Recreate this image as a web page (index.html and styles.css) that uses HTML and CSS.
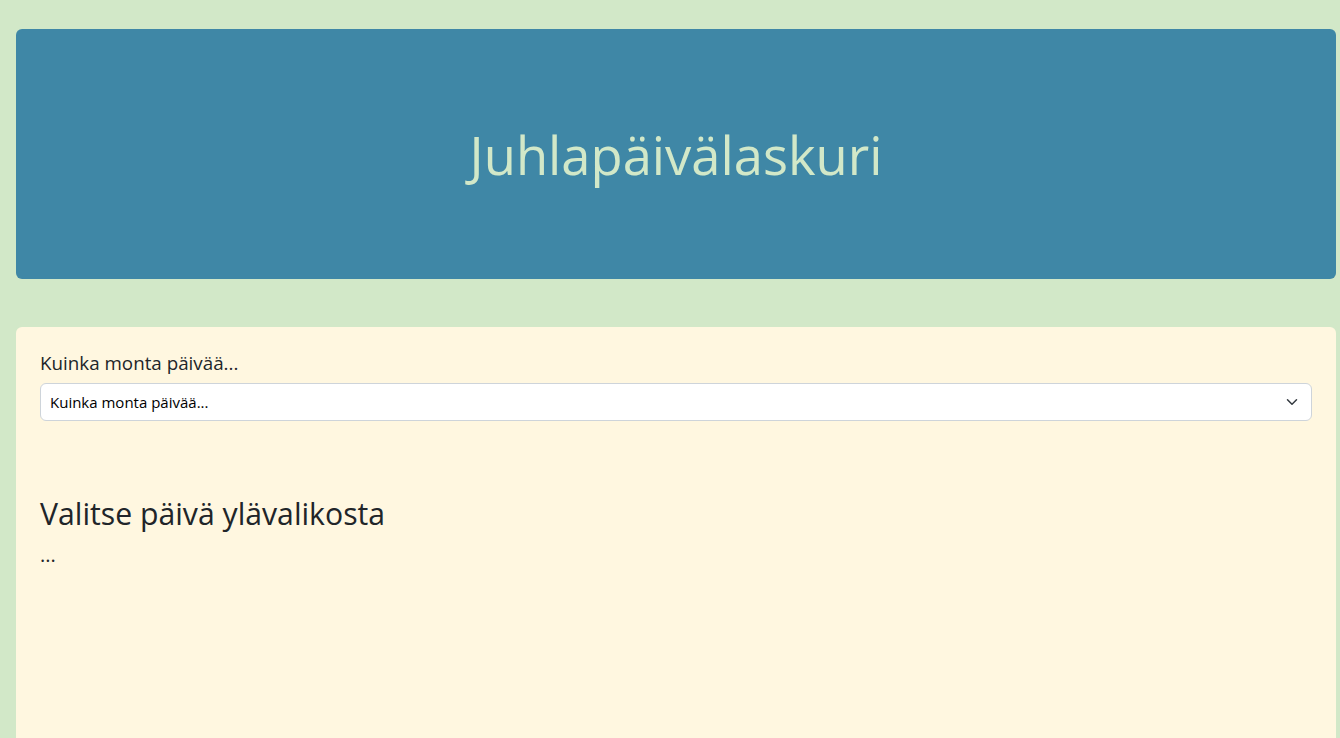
FILE: index.html
```html
<!DOCTYPE html>
<html lang="fi">
<head>
<meta charset="utf-8">
<title>Juhlapäivälaskuri</title>
<link rel="stylesheet" href="styles.css">
</head>
<body>
<div class="page">
  <header class="hero">
    <h1 class="hero-title">Juhlapäivälaskuri</h1>
  </header>
  <main class="card">
    <label class="field-label" for="days">Kuinka monta päivää...</label>
    <div class="select-wrap">
      <select id="days" class="field-select">
        <option>Kuinka monta päivää...</option>
      </select>
      <svg class="chevron" viewBox="0 0 16 16" width="16" height="12" aria-hidden="true"><path fill="none" stroke="#343a40" stroke-linecap="round" stroke-linejoin="round" stroke-width="2" d="m2 5 6 6 6-6"/></svg>
    </div>
    <h2 class="result-title">Valitse päivä ylävalikosta</h2>
    <p class="result-text">...</p>
  </main>
</div>
</body>
</html>
```
FILE: styles.css
```css
* { box-sizing: border-box; }
html, body { margin: 0; padding: 0; }
body {
  background: #d2e8c8;
  font-family: "Open Sans", "Noto Sans", sans-serif;
  color: #212529;
  font-size: 16px;
  line-height: 1.5;
}
.page {
  padding: 29px 4px 0 16px;
  display: flex;
  flex-direction: column;
  gap: 48px;
}
.hero {
  background: #3f87a6;
  border-radius: 6px;
  height: 250px;
  display: flex;
  align-items: center;
  justify-content: center;
}
.hero-title {
  margin: 0;
  color: #d2e8c8;
  font-size: 52.5px;
  font-weight: 400;
  line-height: 1.2;
}
.card {
  background: #fff7e0;
  border-radius: 6px;
  padding: 24px 24px 200px;
  min-height: 420px;
}
.field-label {
  display: block;
  font-size: 18.8px;
  line-height: 24px;
  margin-bottom: 8px;
}
.select-wrap {
  position: relative;
}
.field-select {
  display: block;
  width: 100%;
  height: 38px;
  appearance: none;
  -webkit-appearance: none;
  background: #fff;
  border: 1px solid #ced4da;
  border-radius: 6px;
  padding: 0 36px 0 9px;
  font-family: inherit;
  font-size: 15px;
  color: #000;
}
.chevron {
  position: absolute;
  right: 12px;
  top: 13px;
  pointer-events: none;
}
.result-title {
  margin: 75px 0 0;
  font-size: 30.2px;
  font-weight: 400;
  line-height: 1.2;
}
.result-text {
  margin: 11px 0 0;
  font-size: 20px;
  line-height: 1.2;
}
```
